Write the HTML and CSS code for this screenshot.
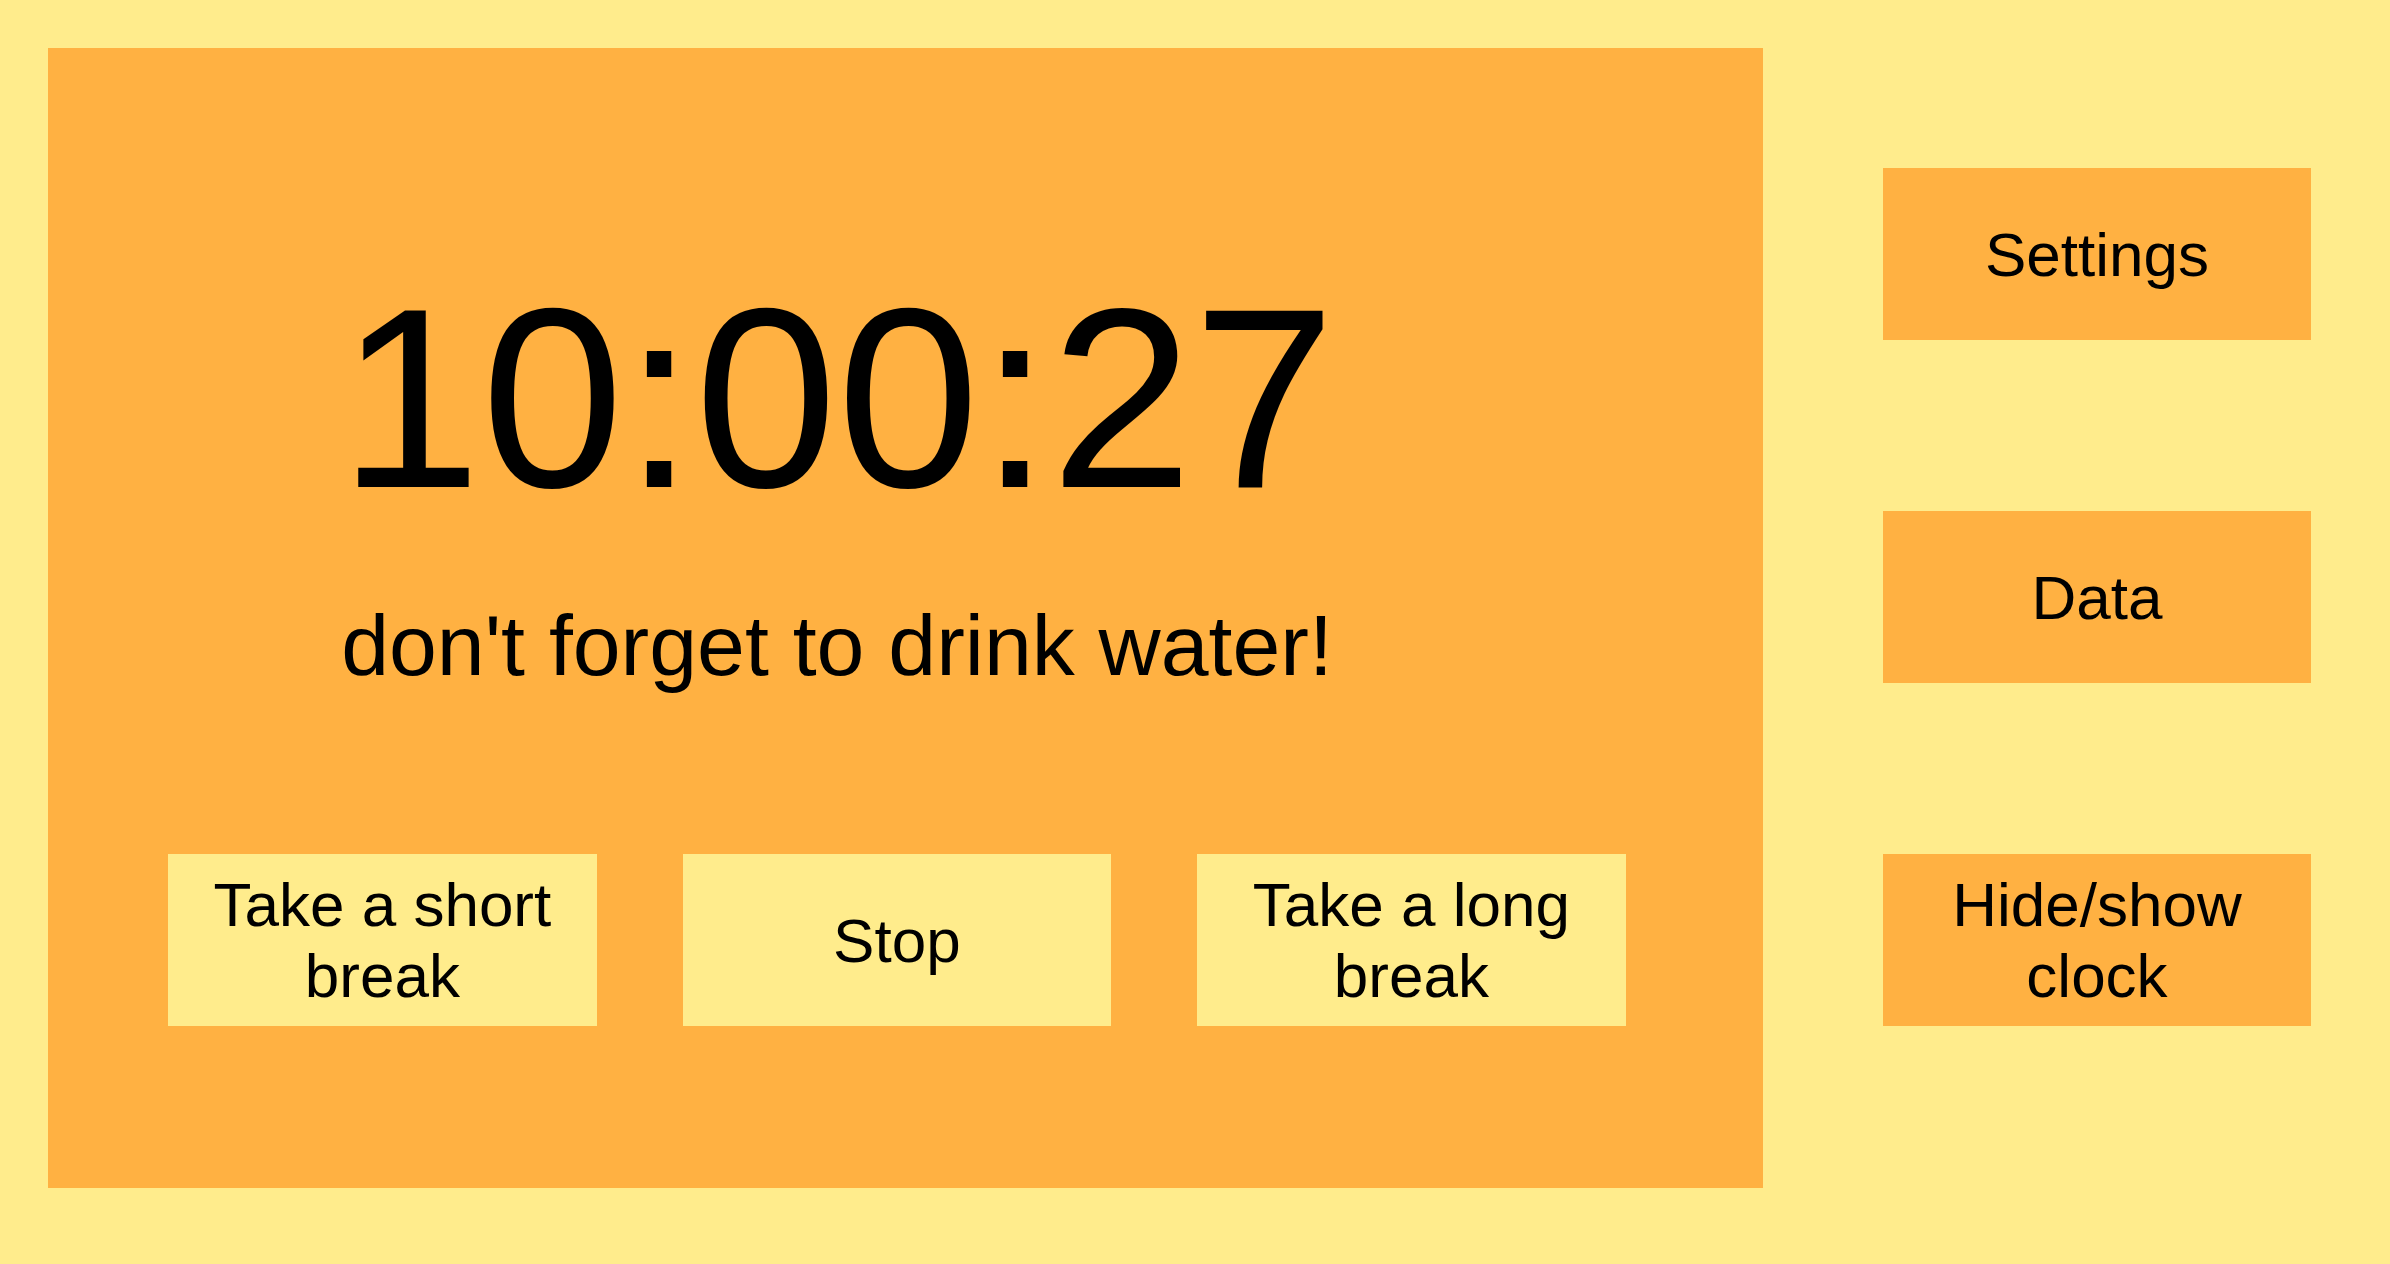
FILE: index.html
```html
<!DOCTYPE html>
<html lang="en">
<head>
<meta charset="utf-8">
<title>Timer</title>
<link rel="stylesheet" href="styles.css">
</head>
<body>
<div class="page">
  <main class="panel">
    <div class="clock">10:00:27</div>
    <div class="message">don't forget to drink water!</div>
    <div class="controls">
      <button class="ctrl">Take a short<br>break</button>
      <button class="ctrl">Stop</button>
      <button class="ctrl">Take a long<br>break</button>
    </div>
  </main>
  <aside class="side">
    <button class="side-btn">Settings</button>
    <button class="side-btn">Data</button>
    <button class="side-btn">Hide/show<br>clock</button>
  </aside>
</div>
</body>
</html>
```

FILE: styles.css
```css
html, body {
  margin: 0;
  padding: 0;
  background: #ffec8c;
  font-family: "Liberation Sans", Arial, sans-serif;
  color: #000;
}

.page {
  display: flex;
  align-items: flex-start;
  padding: 48px 79px 0 48px;
  width: 2390px;
  height: 1264px;
  box-sizing: border-box;
}

.panel {
  width: 1715px;
  height: 1140px;
  flex: none;
  background: #ffb142;
  box-sizing: border-box;
  padding-top: 203px;
  display: flex;
  flex-direction: column;
}

.clock,
.message {
  width: 1578px;
  text-align: center;
  line-height: normal;
}

.clock {
  font-size: 256px;
}

.message {
  font-size: 86px;
  margin-top: 51px;
}

.controls {
  display: flex;
  gap: 85.75px;
  margin-top: 159px;
  margin-left: 120px;
}

.ctrl,
.side-btn {
  border: none;
  margin: 0;
  padding: 0;
  height: 172px;
  font-family: "Liberation Sans", Arial, sans-serif;
  font-size: 62px;
  line-height: normal;
  color: #000;
  text-align: center;
  display: flex;
  align-items: center;
  justify-content: center;
}

.ctrl {
  width: 428.75px;
  background: #ffec8c;
}

.side {
  display: flex;
  flex-direction: column;
  gap: 171px;
  margin-left: 120px;
  padding-top: 120px;
  width: 428px;
  flex: none;
}

.side-btn {
  width: 428px;
  background: #ffb142;
}
```
